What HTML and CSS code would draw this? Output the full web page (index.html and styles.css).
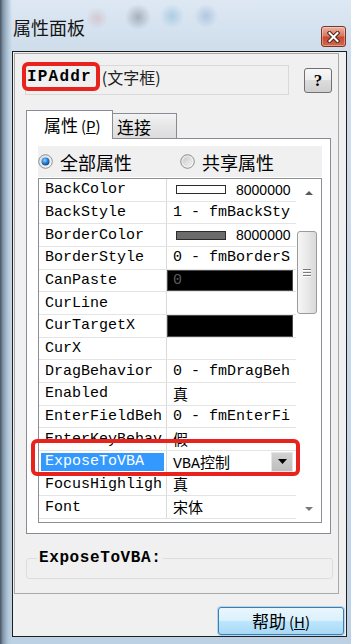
FILE: index.html
```html
<!DOCTYPE html>
<html lang="zh-CN">
<head>
    <meta charset="UTF-8">
    <meta name="viewport" content="width=device-width, initial-scale=1.0">
    <title>属性面板</title>
    <link rel="stylesheet" href="styles.css">
</head>
<body>
    <div class="window">
        <div class="titlebar">
            <span class="title">属性面板</span>
            <button class="close-btn" title="关闭">
                <svg width="13" height="12" viewBox="0 0 13 12">
                    <path d="M2.5 2 L10.5 10 M10.5 2 L2.5 10" stroke="#4a2016" stroke-width="4" stroke-linecap="square"/>
                    <path d="M2.5 2 L10.5 10 M10.5 2 L2.5 10" stroke="#fff" stroke-width="2" stroke-linecap="square"/>
                </svg>
            </button>
        </div>

        <div class="client">
            <div class="sheet">
                <div class="header">
                    <div class="obj-name"><b>IPAddr</b><span class="kind">(文字框)</span></div>
                    <button class="q-btn">?</button>
                </div>

                <div class="tabs">
                    <div class="tab active">属性<span class="key">(<u>P</u>)</span></div>
                    <div class="tab">连接</div>
                </div>

                <div class="tab-panel">
                    <div class="radio-row">
                        <label class="radio">
                            <svg width="15" height="15" viewBox="0 0 15 15">
                                <defs>
                                    <linearGradient id="ring" x1="0" y1="0" x2="1" y2="1">
                                        <stop offset="0" stop-color="#dcdcdc"/>
                                        <stop offset="1" stop-color="#fbfbfb"/>
                                    </linearGradient>
                                    <radialGradient id="dot" cx="0.4" cy="0.35" r="0.7">
                                        <stop offset="0" stop-color="#8fd0ff"/>
                                        <stop offset="0.5" stop-color="#2a86d8"/>
                                        <stop offset="1" stop-color="#0c3f86"/>
                                    </radialGradient>
                                </defs>
                                <circle cx="7.5" cy="7.5" r="6.8" fill="url(#ring)" stroke="#8e8f8f"/>
                                <circle cx="7.5" cy="7.5" r="4" fill="url(#dot)"/>
                            </svg>
                            <span>全部属性</span>
                        </label>
                        <label class="radio">
                            <svg width="15" height="15" viewBox="0 0 15 15">
                                <defs>
                                    <linearGradient id="off" x1="0" y1="0" x2="1" y2="1">
                                        <stop offset="0" stop-color="#c9c9c9"/>
                                        <stop offset="1" stop-color="#f4f4f4"/>
                                    </linearGradient>
                                </defs>
                                <circle cx="7.5" cy="7.5" r="6.8" fill="url(#ring)" stroke="#8e8f8f"/>
                                <circle cx="7.5" cy="7.5" r="4.3" fill="url(#off)" stroke="#d6d6d6" stroke-width="0.6"/>
                            </svg>
                            <span>共享属性</span>
                        </label>
                    </div>

                    <div class="grid">
                        <div class="rows">
                            <div class="row">
                                <div class="name">BackColor</div>
                                <div class="value"><span class="swatch"></span><span class="num">8000000</span></div>
                            </div>
                            <div class="row">
                                <div class="name">BackStyle</div>
                                <div class="value">1 - fmBackSty</div>
                            </div>
                            <div class="row">
                                <div class="name">BorderColor</div>
                                <div class="value"><span class="swatch dark"></span><span class="num">8000000</span></div>
                            </div>
                            <div class="row">
                                <div class="name">BorderStyle</div>
                                <div class="value">0 - fmBorderS</div>
                            </div>
                            <div class="row">
                                <div class="name">CanPaste</div>
                                <div class="value black">0</div>
                            </div>
                            <div class="row">
                                <div class="name">CurLine</div>
                                <div class="value"></div>
                            </div>
                            <div class="row">
                                <div class="name">CurTargetX</div>
                                <div class="value black"></div>
                            </div>
                            <div class="row">
                                <div class="name">CurX</div>
                                <div class="value"></div>
                            </div>
                            <div class="row">
                                <div class="name">DragBehavior</div>
                                <div class="value">0 - fmDragBeh</div>
                            </div>
                            <div class="row">
                                <div class="name">Enabled</div>
                                <div class="value">真</div>
                            </div>
                            <div class="row">
                                <div class="name">EnterFieldBeh</div>
                                <div class="value">0 - fmEnterFi</div>
                            </div>
                            <div class="row">
                                <div class="name">EnterKeyBehav</div>
                                <div class="value">假</div>
                            </div>
                            <div class="row selected">
                                <div class="name">ExposeToVBA</div>
                                <div class="value">VBA控制<span class="drop-btn"><svg width="9" height="5" viewBox="0 0 9 5"><path d="M0 0 H9 L4.5 5 Z" fill="#000"/></svg></span></div>
                            </div>
                            <div class="row">
                                <div class="name">FocusHighligh</div>
                                <div class="value">真</div>
                            </div>
                            <div class="row">
                                <div class="name">Font</div>
                                <div class="value">宋体</div>
                            </div>
                        </div>

                        <div class="scrollbar">
                            <div class="sb-arrow"><svg width="8" height="4" viewBox="0 0 8 4"><path d="M0 4 L4 0 L8 4 Z" fill="#5a5a5a"/></svg></div>
                            <div class="sb-thumb"><span></span><span></span><span></span></div>
                            <div class="sb-arrow down"><svg width="8" height="4" viewBox="0 0 8 4"><path d="M0 0 L8 0 L4 4 Z" fill="#7a7a7a"/></svg></div>
                        </div>
                    </div>
                </div>

                <fieldset class="group">
                    <legend>ExposeToVBA:</legend>
                    <div class="group-body"></div>
                </fieldset>
            </div>

            <div class="footer">
                <button class="help-btn">帮助<span class="key">(<u>H</u>)</span></button>
            </div>
        </div>
    </div>

    <div class="mark mark-name"></div>
    <div class="mark mark-row"></div>
</body>
</html>
```

FILE: styles.css
```css
* {
    margin: 0;
    padding: 0;
    box-sizing: border-box;
}

body {
    width: 351px;
    height: 644px;
    overflow: hidden;
    position: relative;
    font-family: "Noto Sans CJK SC", sans-serif;
    color: #000;
    background:
        linear-gradient(90deg, #46535f 0, #8197ab 3px, #b3c7da 8px, rgba(179, 199, 218, 0) 12px),
        linear-gradient(180deg, #dde8f3 0, #d0deec 45px, #bdd1e5 100%);
}

button {
    font-family: inherit;
    color: inherit;
    cursor: pointer;
}

.window {
    display: flex;
    flex-direction: column;
    height: 644px;
}

/* title bar */
.titlebar {
    height: 51px;
    display: flex;
    align-items: flex-start;
    padding-left: 13px;
    background:
        radial-gradient(circle at 97px 18px, rgba(200, 120, 120, 0.25), rgba(200, 120, 120, 0) 11px),
        radial-gradient(circle at 138px 17px, rgba(70, 80, 90, 0.35), rgba(70, 80, 90, 0) 13px),
        radial-gradient(circle at 172px 16px, rgba(70, 150, 200, 0.3), rgba(70, 150, 200, 0) 12px),
        radial-gradient(circle at 206px 16px, rgba(90, 130, 190, 0.3), rgba(90, 130, 190, 0) 12px);
}

.title {
    font-size: 18px;
    line-height: 18px;
    margin-top: 18px;
    color: #151515;
}

.close-btn {
    margin-left: auto;
    margin-right: 5px;
    margin-top: 26px;
    width: 25px;
    height: 21px;
    border: 1px solid #7d3424;
    border-radius: 3px;
    background: linear-gradient(#eab3a2, #d87a64 45%, #c64a30 55%, #d2694d);
    box-shadow: inset 0 0 0 1px rgba(255, 255, 255, 0.35);
    display: flex;
    align-items: center;
    justify-content: center;
}

/* client area */
.client {
    margin: 0 4px 0 12px;
    height: 586px;
    border: 1px solid #1f1f1f;
    background-color: #f0f0f0;
    padding: 1px 0 0 1px;
    display: flex;
    flex-direction: column;
}

.sheet {
    width: 325px;
    height: 541px;
    border: 1px solid #a9a9a9;
}

.header {
    display: flex;
    align-items: flex-start;
    margin-top: 11px;
    padding-left: 10px;
}

.obj-name {
    width: 264px;
    height: 30px;
    border: 1px solid #d9d9d9;
    padding: 1px 0 0 1px;
    display: flex;
    font-size: 16px;
    line-height: 20px;
}

.obj-name b {
    font-family: "Liberation Mono", monospace;
    font-size: 16px;
    letter-spacing: 1.2px;
}

.obj-name .kind {
    margin-left: 10px;
    color: #222;
}

.q-btn {
    margin-left: 15px;
    margin-top: 3px;
    width: 28px;
    height: 25px;
    border: 1px solid #707070;
    border-radius: 3px;
    background: linear-gradient(#f7f7f7, #ececec 50%, #dddddd 50%, #cfcfcf);
    font-family: "Liberation Serif", serif;
    font-weight: bold;
    font-size: 17px;
    line-height: 22px;
}

/* tabs */
.tabs {
    display: flex;
    align-items: flex-end;
    margin-top: 15px;
    padding-left: 11px;
    margin-bottom: -1px;
    position: relative;
    z-index: 1;
}

.tab {
    width: 65px;
    height: 25px;
    margin-left: -1px;
    margin-bottom: 1px;
    border: 1px solid #898c95;
    border-bottom: none;
    background: linear-gradient(#f4f4f4, #e6e6e6 50%, #dcdcdc);
    font-size: 17px;
    line-height: 22px;
    padding: 2px 0 0 4px;
}

.tab.active {
    width: 87px;
    height: 29px;
    margin-left: 0;
    margin-bottom: 0;
    background: #fff;
    line-height: 26px;
    padding: 1px 0 0 17px;
}

.key {
    font-size: 15px;
    margin-left: 3px;
}

.tab-panel {
    margin-left: 11px;
    width: 305px;
    height: 396px;
    border: 1px solid #898c95;
    background-color: #fff;
    padding: 7px 8px 0 11px;
}

.radio-row {
    height: 31px;
    background-color: #f0f0f0;
    display: flex;
    align-items: center;
    font-size: 18px;
}

.radio {
    width: 158px;
    display: flex;
    align-items: center;
    gap: 7px;
}

/* property grid */
.grid {
    margin-top: 1px;
    height: 345px;
    border: 1px solid #8d8f94;
    background-color: #fff;
    display: flex;
    overflow: hidden;
}

.rows {
    flex: 1;
}

.row {
    height: calc(68px / 3);
    display: grid;
    grid-template-columns: 128px 1fr;
    border-bottom: 1px solid #e4e4e4;
    font-family: "Liberation Mono", "Noto Sans CJK SC", monospace;
    font-size: 15px;
}

.name {
    display: flex;
    align-items: center;
    padding-left: 6px;
    border-right: 1px solid #dadada;
    white-space: nowrap;
    overflow: hidden;
}

.value {
    display: flex;
    align-items: center;
    padding-left: 6px;
    margin-right: 3px;
    white-space: nowrap;
    overflow: hidden;
}

.value.black {
    background-color: #000;
    border: 1px solid #4a4a4a;
    padding-left: 5px;
    color: #5c5c5c;
}

.swatch {
    flex: none;
    width: 50px;
    height: 9px;
    margin: 0 10px 0 3px;
    border: 1px solid #2c2c2c;
    background-color: #fff;
}

.swatch.dark {
    background-color: #6b6b6b;
}

.num {
    font-family: "Liberation Sans", sans-serif;
    font-size: 14px;
}

.row.selected .name {
    background-color: #3399ff;
    color: #fff;
    box-shadow: inset 0 0 0 2px #fff;
}

.drop-btn {
    margin-left: auto;
    width: 22px;
    height: 20px;
    background: linear-gradient(#d2d2d2, #bdbdbd);
    border: 1px solid #e6e6e6;
    display: flex;
    align-items: center;
    justify-content: center;
}

.scrollbar {
    width: 25px;
    display: flex;
    flex-direction: column;
}

.sb-arrow {
    height: 28px;
    display: flex;
    align-items: center;
    justify-content: center;
}

.sb-arrow.down {
    margin-top: auto;
    padding-top: 1px;
}

.sb-thumb {
    margin: 24px 0 0 1px;
    width: 20px;
    height: 83px;
    border: 1px solid #9b9b9b;
    border-radius: 3px;
    background: linear-gradient(90deg, #f6f6f6, #e9e9e9 50%, #d9d9d9);
    display: flex;
    flex-direction: column;
    align-items: center;
    justify-content: center;
    gap: 2px;
}

.sb-thumb span {
    width: 8px;
    height: 1px;
    background-color: #7a7a7a;
    box-shadow: 0 1px 0 #fff;
}

/* group box */
.group {
    margin: 16px 0 0 11px;
    width: 307px;
    border: 1px solid #d7dfe4;
    border-radius: 3px;
    padding: 0 0 0 10px;
}

.group legend {
    font-family: "Liberation Mono", monospace;
    font-weight: bold;
    font-size: 16px;
    letter-spacing: 0.6px;
    line-height: 16px;
    padding: 0 2px;
}

.group-body {
    height: 12px;
}

/* bottom buttons */
.footer {
    display: flex;
    justify-content: flex-end;
    padding: 13px 2px 0 0;
}

.help-btn {
    width: 126px;
    height: 28px;
    border: 1px solid #3c7fb1;
    border-radius: 3px;
    background: linear-gradient(#eaf6fd, #d9f0fc 50%, #bee6fd 50%, #a7d9f5);
    box-shadow: 0 0 0 1px rgba(110, 180, 235, 0.45);
    font-size: 17px;
    line-height: 24px;
}

/* red annotation boxes */
.mark {
    position: absolute;
    border: 4px solid #e8231e;
    border-radius: 6px;
}

.mark-name {
    left: 22px;
    top: 62px;
    width: 78px;
    height: 29px;
}

.mark-row {
    left: 31px;
    top: 439px;
    width: 269px;
    height: 37px;
}
```
